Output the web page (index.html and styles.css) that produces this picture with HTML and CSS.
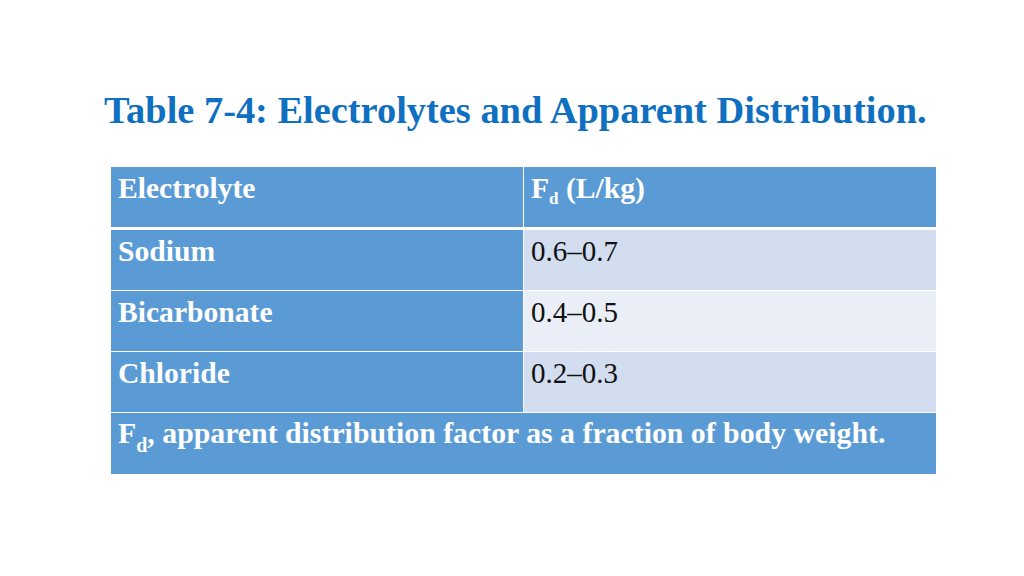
FILE: index.html
```html
<!DOCTYPE html>
<html>
<head>
<meta charset="utf-8">
<link rel="stylesheet" href="styles.css">
</head>
<body>
<h1 class="title">Table 7-4: Electrolytes and Apparent Distribution.</h1>
<div class="table">
  <div class="row head">
    <div class="cell key">Electrolyte</div>
    <div class="cell key">F<sub class="sub">d</sub> (L/kg)</div>
  </div>
  <div class="row">
    <div class="cell key">Sodium</div>
    <div class="cell val dark">0.6–0.7</div>
  </div>
  <div class="row">
    <div class="cell key">Bicarbonate</div>
    <div class="cell val light">0.4–0.5</div>
  </div>
  <div class="row">
    <div class="cell key">Chloride</div>
    <div class="cell val dark">0.2–0.3</div>
  </div>
  <div class="row foot">
    <div class="cell key note">F<sub class="sub big">d</sub>, apparent distribution factor as a fraction of body weight.</div>
  </div>
</div>
</body>
</html>
```

FILE: styles.css
```css
html, body {
  margin: 0;
  padding: 0;
  background: #ffffff;
}
body {
  width: 1024px;
  height: 576px;
  overflow: hidden;
  font-family: "Liberation Serif", "Times New Roman", serif;
}
.title {
  margin: 88px 0 0 104px;
  font-size: 38.4px;
  line-height: 44px;
  font-weight: bold;
  color: #0f6fc0;
  white-space: nowrap;
}
.table {
  margin: 35px 0 0 111px;
  width: 825px;
  display: flex;
  flex-direction: column;
  gap: 1px;
}
.row {
  display: grid;
  grid-template-columns: 412px 412px;
  column-gap: 1px;
  height: 60px;
}
.row.head {
  margin-bottom: 2px;
}
.row.foot {
  grid-template-columns: 825px;
  height: 61px;
}
.cell {
  box-sizing: border-box;
  padding: 5px 7px 0;
  font-size: 29px;
  line-height: 33px;
  white-space: nowrap;
}
.key {
  background: #5b9bd5;
  color: #ffffff;
  font-weight: bold;
  font-size: 29.6px;
}
.val {
  color: #111111;
}
.dark {
  background: #d2deef;
}
.light {
  background: #eaeff7;
}
.note {
  padding-top: 3px;
  font-size: 29.8px;
}
.sub {
  font-size: 17px;
  vertical-align: -6px;
  line-height: 0;
}
.sub.big {
  font-size: 20px;
  vertical-align: -9px;
}
```
